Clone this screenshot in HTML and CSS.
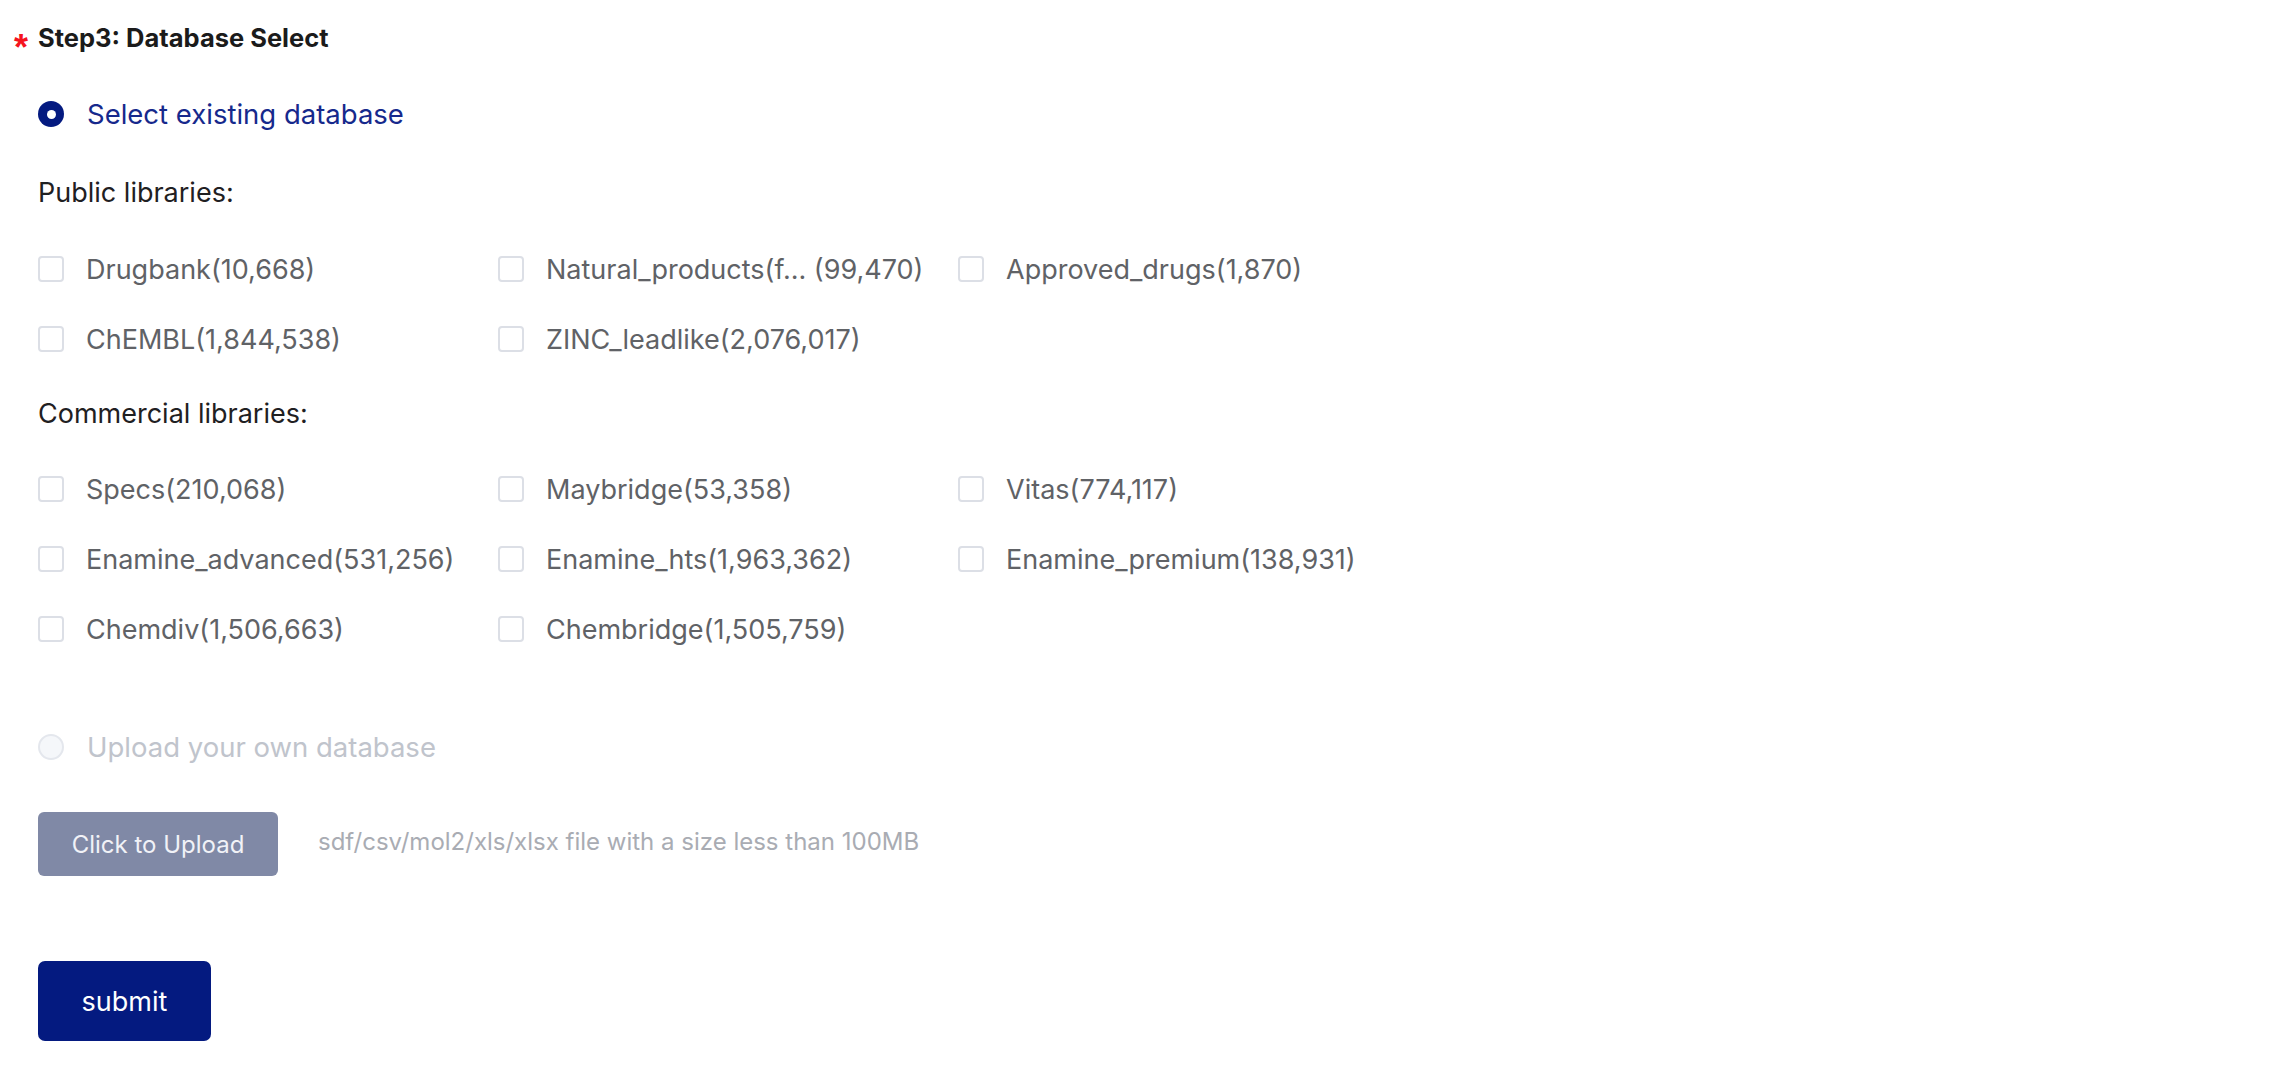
FILE: index.html
```html
<!DOCTYPE html>
<html lang="en">
<head>
    <meta charset="UTF-8">
    <meta name="viewport" content="width=device-width, initial-scale=1.0">
    <title>Step3: Database Select</title>
    <link rel="stylesheet" href="styles.css">
</head>
<body>
    <div class="page">
        <div class="form-item">
            <!-- Step label -->
            <div class="item-label"><span class="req">*</span>Step3: Database Select</div>

            <div class="item-content">
                <!-- Existing database -->
                <label class="radio is-checked">
                    <span class="radio-inner"></span>
                    <span class="radio-label">Select existing database</span>
                </label>

                <div class="lib-title first">Public libraries:</div>
                <div class="lib-grid">
                    <label class="checkbox"><span class="checkbox-inner"></span><span class="checkbox-label">Drugbank(10,668)</span></label>
                    <label class="checkbox"><span class="checkbox-inner"></span><span class="checkbox-label">Natural_products(f... (99,470)</span></label>
                    <label class="checkbox"><span class="checkbox-inner"></span><span class="checkbox-label">Approved_drugs(1,870)</span></label>
                    <label class="checkbox"><span class="checkbox-inner"></span><span class="checkbox-label">ChEMBL(1,844,538)</span></label>
                    <label class="checkbox"><span class="checkbox-inner"></span><span class="checkbox-label">ZINC_leadlike(2,076,017)</span></label>
                </div>

                <div class="lib-title">Commercial libraries:</div>
                <div class="lib-grid">
                    <label class="checkbox"><span class="checkbox-inner"></span><span class="checkbox-label">Specs(210,068)</span></label>
                    <label class="checkbox"><span class="checkbox-inner"></span><span class="checkbox-label">Maybridge(53,358)</span></label>
                    <label class="checkbox"><span class="checkbox-inner"></span><span class="checkbox-label">Vitas(774,117)</span></label>
                    <label class="checkbox"><span class="checkbox-inner"></span><span class="checkbox-label">Enamine_advanced(531,256)</span></label>
                    <label class="checkbox"><span class="checkbox-inner"></span><span class="checkbox-label">Enamine_hts(1,963,362)</span></label>
                    <label class="checkbox"><span class="checkbox-inner"></span><span class="checkbox-label">Enamine_premium(138,931)</span></label>
                    <label class="checkbox"><span class="checkbox-inner"></span><span class="checkbox-label">Chemdiv(1,506,663)</span></label>
                    <label class="checkbox"><span class="checkbox-inner"></span><span class="checkbox-label">Chembridge(1,505,759)</span></label>
                </div>

                <!-- Own database (disabled) -->
                <label class="radio is-disabled">
                    <span class="radio-inner"></span>
                    <span class="radio-label">Upload your own database</span>
                </label>

                <div class="upload-row">
                    <button class="upload-btn" disabled>Click to Upload</button>
                    <span class="upload-tip">sdf/csv/mol2/xls/xlsx file with a size less than 100MB</span>
                </div>

                <button class="submit-btn">submit</button>
            </div>
        </div>
    </div>
</body>
</html>
```

FILE: styles.css
```css
body {
    margin: 0;
    background: #fff;
    font-family: Inter, "Liberation Sans", Arial, sans-serif;
}
.page {
    padding: 17px 0 0 14px;
}
.item-label {
    display: flex;
    align-items: center;
    height: 40px;
    font-size: 25.5px;
    font-weight: 700;
    color: #1b1b1b;
}
.req {
    width: 24px;
    padding-top: 21px;
    font-family: "Liberation Sans", Arial, sans-serif;
    font-size: 36px;
    line-height: 36px;
    color: #f5141e;
}
.item-content {
    padding-left: 24px;
}

/* radios */
.radio {
    display: flex;
    align-items: center;
    height: 40px;
    margin-top: 37px;
}
.radio-inner {
    width: 26px;
    height: 26px;
    box-sizing: border-box;
    border-radius: 50%;
    position: relative;
}
.radio-label {
    margin-left: 23px;
    font-size: 27.5px;
}
.radio.is-checked .radio-inner {
    background: #041a80;
}
.radio.is-checked .radio-inner::after {
    content: "";
    position: absolute;
    left: 8.5px;
    top: 8.5px;
    width: 9px;
    height: 9px;
    border-radius: 50%;
    background: #fff;
}
.radio.is-checked .radio-label {
    color: #16298c;
}
.radio.is-disabled {
    margin-top: 78px;
}
.radio.is-disabled .radio-inner {
    background: #f5f7fa;
    border: 2px solid #e4e7ed;
}
.radio.is-disabled .radio-label {
    color: #c0c4cc;
}

/* library groups */
.lib-title {
    height: 40px;
    line-height: 40px;
    margin-top: 35px;
    font-size: 27px;
    color: #1f2022;
}
.lib-title.first {
    margin-top: 39px;
}
.lib-grid {
    display: grid;
    grid-template-columns: repeat(3, 460px);
    row-gap: 30px;
    margin-top: 35px;
}
.lib-title.first + .lib-grid {
    margin-top: 36px;
}
.checkbox {
    display: flex;
    align-items: center;
    height: 40px;
    white-space: nowrap;
}
.checkbox-inner {
    width: 26px;
    height: 26px;
    box-sizing: border-box;
    border: 2px solid #dcdfe6;
    border-radius: 4px;
    background: #fff;
    flex-shrink: 0;
}
.checkbox-label {
    margin-left: 22px;
    font-size: 27px;
    color: #606266;
}

/* upload */
.upload-row {
    display: flex;
    align-items: center;
    margin-top: 45px;
}
.upload-btn {
    width: 240px;
    height: 64px;
    border: none;
    border-radius: 6px;
    background: #8089a6;
    color: #f1f2f7;
    font-family: Inter, "Liberation Sans", Arial, sans-serif;
    font-size: 24px;
    padding: 0;
}
.upload-tip {
    margin-left: 40px;
    margin-bottom: 6px;
    font-size: 24px;
    color: #a9acb3;
}

.submit-btn {
    display: block;
    width: 173px;
    height: 80px;
    margin-top: 85px;
    border: none;
    border-radius: 7px;
    background: #041a80;
    color: #fff;
    font-family: Inter, "Liberation Sans", Arial, sans-serif;
    font-size: 27px;
    padding: 0;
    cursor: pointer;
}
```
